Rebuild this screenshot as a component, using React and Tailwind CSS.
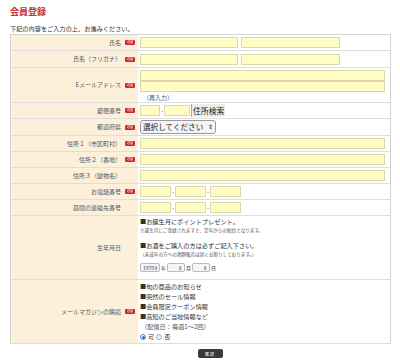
import React from 'react';

const jp = { fontFamily: '"Noto Sans CJK JP", "Noto Sans", sans-serif' };

const Req = ({ show = true }) => (
    <span
        className={`ml-[4px] inline-flex h-[5px] w-[10px] items-center justify-center rounded-[1px] text-[3px] leading-none ${show ? 'bg-[#d4242f] text-white' : 'bg-transparent text-transparent'}`}
    >
        必須
    </span>
);

const Input = ({ className = '' }) => (
    <div className={`h-[11px] border border-[#dcd9a8] bg-[#fffcc6] ${className}`} />
);

const Dash = () => <span className="mx-[1px] text-[6px] leading-none text-[#555]">-</span>;

const Row = ({ label, req = true, h, children, top = false }) => (
    <div className="flex border-b border-[#dedede]" style={{ height: h }}>
        <div className="flex w-[127px] shrink-0 items-center justify-end bg-[#fdf0da] pr-[3px]">
            <span className="whitespace-nowrap text-[6px] leading-none text-[#555]">{label}</span>
            <Req show={req} />
        </div>
        <div className={`flex flex-1 flex-col bg-white pl-[2px] pr-[5px] ${top ? 'justify-start pt-[2px]' : 'justify-center'}`}>
            {children}
        </div>
    </div>
);

const MiniSelect = ({ value = '', w }) => (
    <span
        className="inline-flex h-[9px] items-center justify-between rounded-[2px] border border-[#bbb] bg-[#f6f6f6] px-[2px] text-[5px] leading-none text-[#333]"
        style={{ width: w }}
    >
        <span>{value}</span>
        <span>⇕</span>
    </span>
);

export default function App() {
    return (
        <div className="h-[362px] w-[400px] overflow-hidden bg-white" style={jp}>
            <div className="px-[10px] pt-[5px]">
                <h1 className="text-[9px] font-bold leading-[13px] text-[#c52d38]">会員登録</h1>
                <p className="mt-[7px] text-[6.2px] leading-[8px] text-[#333]">下記の内容をご入力の上、お進みください。</p>

                <div className="mt-[1px] w-[381px] border border-[#d4d4d4] border-b-0">
                    <Row label="氏名" h={16}>
                        <div className="flex gap-[3px]">
                            <Input className="w-[98px]" />
                            <Input className="w-[99px]" />
                        </div>
                    </Row>
                    <Row label="氏名（フリガナ）" h={17}>
                        <div className="flex gap-[3px]">
                            <Input className="w-[98px]" />
                            <Input className="w-[99px]" />
                        </div>
                    </Row>
                    <Row label="Eメールアドレス" h={35} top>
                        <Input className="w-full" />
                        <Input className="w-full" />
                        <span className="mt-[3px] pl-[3px] text-[6px] leading-none text-[#555]">（再入力）</span>
                    </Row>
                    <Row label="郵便番号" h={16}>
                        <div className="flex items-center">
                            <Input className="w-[20px]" />
                            <Dash />
                            <Input className="w-[26px]" />
                            <span className="ml-[1px] flex h-[13px] items-center whitespace-nowrap border-l border-[#aaa] bg-[#eeeee6] px-[1px] text-[7.8px] leading-none text-[#222]">
                                住所検索
                            </span>
                        </div>
                    </Row>
                    <Row label="都道府県" h={17}>
                        <span className="inline-flex h-[14px] w-[76px] items-center justify-between whitespace-nowrap rounded-[3px] border border-[#999] bg-[#f4f4f4] px-[2px] text-[7.6px] leading-none text-[#222]">
                            <span>選択してください</span>
                            <span className="text-[6px]">⇕</span>
                        </span>
                    </Row>
                    <Row label="住所１（市区町村）" h={16}>
                        <Input className="w-full" />
                    </Row>
                    <Row label="住所２（番地）" h={16}>
                        <Input className="w-full" />
                    </Row>
                    <Row label="住所３（建物名）" req={false} h={16}>
                        <Input className="w-full" />
                    </Row>
                    <Row label="お電話番号" h={16}>
                        <div className="flex items-center">
                            <Input className="w-[31px]" />
                            <Dash />
                            <Input className="w-[31px]" />
                            <Dash />
                            <Input className="w-[31px]" />
                        </div>
                    </Row>
                    <Row label="昼間の連絡先番号" req={false} h={16}>
                        <div className="flex items-center">
                            <Input className="w-[31px]" />
                            <Dash />
                            <Input className="w-[31px]" />
                            <Dash />
                            <Input className="w-[31px]" />
                        </div>
                    </Row>
                    <Row label="生年月日" req={false} h={64} top>
                        <div className="text-[6.2px] leading-[8px] text-[#333]">
                            <p>■お誕生月にポイントプレゼント。</p>
                            <p className="mt-[1px] text-[4.6px] leading-[7px] text-[#555]">※誕生月にご登録されますと、翌年からの配信となります。</p>
                            <p className="mt-[8px]">■お酒をご購入の方は必ずご記入下さい。</p>
                            <p className="mt-[1px] text-[4.6px] leading-[7px] text-[#555]">（未成年の方への酒類販売は固くお断りしております。）</p>
                            <div className="mt-[5px] flex items-center gap-[1px] text-[5px] leading-none">
                                <MiniSelect value="1970" w={20} />
                                <span>年</span>
                                <MiniSelect w={18} />
                                <span>月</span>
                                <MiniSelect w={18} />
                                <span>日</span>
                            </div>
                        </div>
                    </Row>
                    <Row label="メールマガジンの購読" h={64} top>
                        <div className="text-[6.2px] leading-[10px] text-[#333]">
                            <p>■旬の商品のお知らせ</p>
                            <p>■突然のセール情報</p>
                            <p>■会員限定クーポン情報</p>
                            <p>■高知のご当地情報など</p>
                            <p className="pl-[1px] text-[#555]">（配信日：毎週1〜2回）</p>
                            <div className="flex items-center gap-[2px]">
                                <span className="flex h-[6px] w-[6px] items-center justify-center rounded-full border border-[#4a8fe0] bg-white">
                                    <span className="h-[3px] w-[3px] rounded-full bg-[#2a6fd0]" />
                                </span>
                                <span>可</span>
                                <span className="h-[6px] w-[6px] rounded-full border border-[#aaa] bg-[#f4f4f4]" />
                                <span>否</span>
                            </div>
                        </div>
                    </Row>
                </div>

                <div className="flex justify-center pt-[5px] pl-[20px]">
                    <button className="flex h-[9px] w-[25px] items-center justify-center rounded-[2px] bg-[#3a3a3a] text-[4px] leading-none tracking-[1px] text-white">
                        確認
                    </button>
                </div>
                <div className="mt-[5px] h-px w-[381px] bg-[#ccc]" />
            </div>
        </div>
    );
}
